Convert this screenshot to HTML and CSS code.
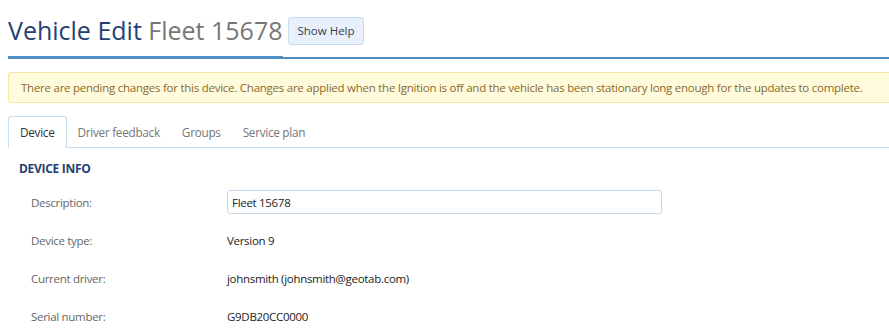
FILE: index.html
```html
<!DOCTYPE html>
<html lang="en">
<head>
    <meta charset="UTF-8">
    <meta name="viewport" content="width=device-width, initial-scale=1.0">
    <title>Vehicle Edit</title>
    <link rel="stylesheet" href="styles.css">
</head>
<body>
    <div class="page">
        <div class="header">
            <h1 class="title">Vehicle Edit <span class="title-sub">Fleet 15678</span></h1>
            <button class="help-btn">Show Help</button>
        </div>
        <div class="header-rule">
            <div class="header-rule-strong"></div>
        </div>

        <div class="alert">
            There are pending changes for this device. Changes are applied when the Ignition is off and the vehicle has been stationary long enough for the updates to complete.
        </div>

        <div class="tabs">
            <div class="tab active">Device</div>
            <div class="tab">Driver feedback</div>
            <div class="tab">Groups</div>
            <div class="tab">Service plan</div>
        </div>

        <h2 class="section-title">DEVICE INFO</h2>

        <div class="form">
            <div class="row">
                <label class="row-label" for="desc">Description:</label>
                <input class="row-input" type="text" id="desc" value="Fleet 15678">
            </div>
            <div class="row">
                <span class="row-label">Device type:</span>
                <span class="row-value">Version 9</span>
            </div>
            <div class="row">
                <span class="row-label">Current driver:</span>
                <span class="row-value">johnsmith (johnsmith@geotab.com)</span>
            </div>
            <div class="row">
                <span class="row-label">Serial number:</span>
                <span class="row-value">G9DB20CC0000</span>
            </div>
        </div>
    </div>
</body>
</html>
```

FILE: styles.css
```css
* {
    margin: 0;
    padding: 0;
    box-sizing: border-box;
}

body {
    font-family: 'Open Sans', 'Noto Sans', sans-serif;
    background: #fff;
    color: #333;
    overflow: hidden;
}

.page {
    padding: 0 0 0 8px;
}

.header {
    display: flex;
    align-items: center;
    gap: 6px;
    padding-top: 14px;
    height: 46px;
}

.title {
    font-size: 25px;
    font-weight: 400;
    color: #253f73;
    line-height: 30px;
}

.title-sub {
    color: #777;
}

.help-btn {
    font-family: inherit;
    font-size: 11.5px;
    color: #333b55;
    background: #e8f1fb;
    border: 1px solid #c8dbef;
    border-radius: 3px;
    height: 28px;
    padding: 0 8px;
    margin-top: 1px;
}

.header-rule {
    margin-top: 11px;
    height: 2px;
    background: #4f8fc3;
    position: relative;
}

.header-rule-strong {
    position: absolute;
    left: 0;
    top: -1px;
    width: 275px;
    height: 3px;
    background: #4f8fc3;
}

.alert {
    margin-top: 13px;
    height: 31px;
    padding: 0 12px;
    display: flex;
    align-items: center;
    background: #fffbdc;
    border: 1px solid #f8e7a1;
    border-right: none;
    border-radius: 3px 0 0 3px;
    color: #8a6a2c;
    font-size: 11.5px;
    letter-spacing: -0.25px;
    white-space: nowrap;
}

.tabs {
    display: flex;
    margin-top: 13px;
    border-bottom: 1px solid #c9dcec;
    height: 32px;
}

.tab {
    padding: 0 10px;
    font-size: 11.8px;
    color: #777;
    line-height: 31px;
    letter-spacing: -0.3px;
    border: 1px solid transparent;
    border-bottom: none;
    border-radius: 3px 3px 0 0;
}

.tab.active {
    padding: 0 11px;
    color: #333;
    background: #fff;
    border-color: #c9dcec;
    margin-bottom: -1px;
    height: 32px;
}

.section-title {
    font-size: 12px;
    font-weight: 700;
    color: #253f73;
    margin: 13px 0 0 11px;
    line-height: 16px;
    letter-spacing: -0.3px;
}

.form {
    margin-top: 6px;
    display: flex;
    flex-direction: column;
}

.row {
    display: flex;
    align-items: center;
    height: 38px;
}

.row-label {
    width: 219px;
    padding-left: 23px;
    font-size: 11.5px;
    color: #666;
    letter-spacing: -0.3px;
}

.row-value {
    font-size: 11.5px;
    color: #222;
    letter-spacing: -0.3px;
}

.row-input {
    width: 435px;
    height: 24px;
    border: 1px solid #c5d9ea;
    border-radius: 3px;
    padding: 0 4px;
    font-family: inherit;
    font-size: 11.5px;
    color: #222;
    letter-spacing: -0.3px;
}
```
